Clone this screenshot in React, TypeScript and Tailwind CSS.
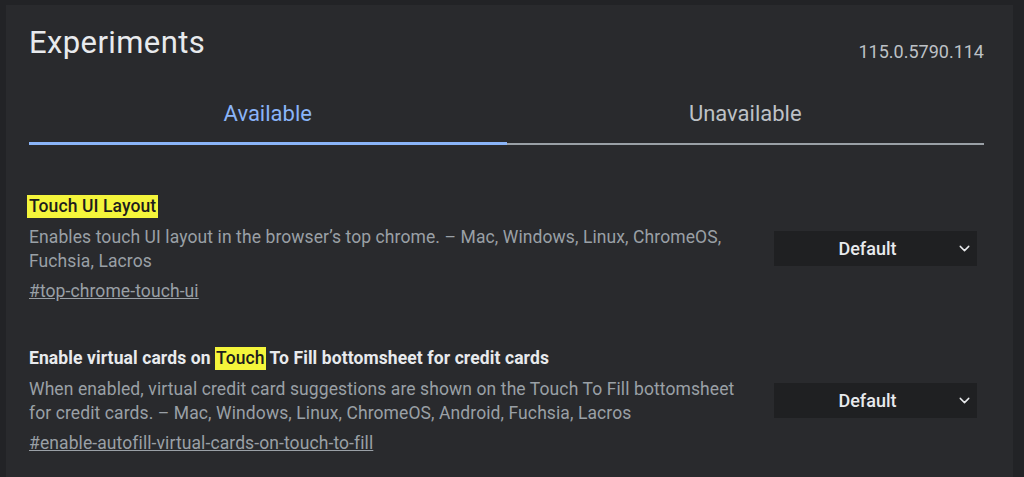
import { ChevronDown } from "lucide-react";

type Flag = {
  title: React.ReactNode;
  description: string[];
  anchor: string;
};

const flags: Flag[] = [
  {
    title: (
      <span className="inline-block h-[23px] leading-[23px] bg-[#f4f53b] text-[#1d1d1d] px-[2px] -ml-[2px] font-medium">
        Touch UI Layout
      </span>
    ),
    description: [
      "Enables touch UI layout in the browser’s top chrome. – Mac, Windows, Linux, ChromeOS,",
      "Fuchsia, Lacros",
    ],
    anchor: "#top-chrome-touch-ui",
  },
  {
    title: (
      <span className="font-bold text-[#e8eaed]">
        Enable virtual cards on{" "}
        <span className="inline-block h-[23px] leading-[23px] bg-[#f4f53b] text-[#1d1d1d] font-medium px-[1px]">
          Touch
        </span>{" "}
        To Fill bottomsheet for credit cards
      </span>
    ),
    description: [
      "When enabled, virtual credit card suggestions are shown on the Touch To Fill bottomsheet",
      "for credit cards. – Mac, Windows, Linux, ChromeOS, Android, Fuchsia, Lacros",
    ],
    anchor: "#enable-autofill-virtual-cards-on-touch-to-fill",
  },
];

function FlagSelect() {
  return (
    <div className="w-[203px] h-[35px] mr-[7px] bg-[#1f2022] flex items-center relative">
      <span className="flex-1 text-center text-[18px] text-[#e8eaed] font-medium pr-[16px]">
        Default
      </span>
      <ChevronDown
        className="absolute right-[4px] top-[9px] w-[17px] h-[17px] text-[#e8eaed]"
        strokeWidth={2}
      />
    </div>
  );
}

export default function App() {
  return (
    <div
      className="w-[1024px] h-[477px] bg-[#222326] flex overflow-hidden"
      style={{ fontFamily: "Roboto, 'Liberation Sans', sans-serif" }}
    >
      <div className="ml-[6px] mt-[5px] mr-[11px] flex-1 bg-[#292a2d] pl-[23px] pr-[29px]">
        {/* header */}
        <div className="flex justify-between items-start pt-[18px]">
          <h1 className="text-[31px] leading-[40px] tracking-[0.4px] text-[#e8eaed]">Experiments</h1>
          <span className="text-[18px] leading-[22px] text-[#bdc1c6] mt-[18px]">115.0.5790.114</span>
        </div>

        {/* tabs */}
        <div className="flex mt-[38px]">
          <div className="flex-1 flex flex-col items-center">
            <span className="text-[22px] leading-[26px] text-[#8ab4f8]">Available</span>
            <div className="mt-[15px] h-[3px] w-full bg-[#8ab4f8]" />
          </div>
          <div className="flex-1 flex flex-col items-center">
            <span className="text-[22px] leading-[26px] text-[#bdc1c6]">Unavailable</span>
            <div className="mt-[16px] h-[2px] w-full bg-[#9aa0a6]" />
          </div>
        </div>

        {/* flag list */}
        <div className="flex flex-col gap-[43px] mt-[49px]">
          {flags.map((flag) => (
            <div key={flag.anchor} className="flex items-center">
              <div className="flex-1 text-[17.5px] tracking-[0.1px] whitespace-nowrap">
                <div className="leading-[24px]">{flag.title}</div>
                <div className="mt-[7px] text-[#9aa0a6] leading-[24px]">
                  {flag.description.map((line) => (
                    <div key={line}>{line}</div>
                  ))}
                </div>
                <a className="block mt-[6px] text-[#9aa0a6] underline leading-[24px]">{flag.anchor}</a>
              </div>
              <FlagSelect />
            </div>
          ))}
        </div>
      </div>
    </div>
  );
}
